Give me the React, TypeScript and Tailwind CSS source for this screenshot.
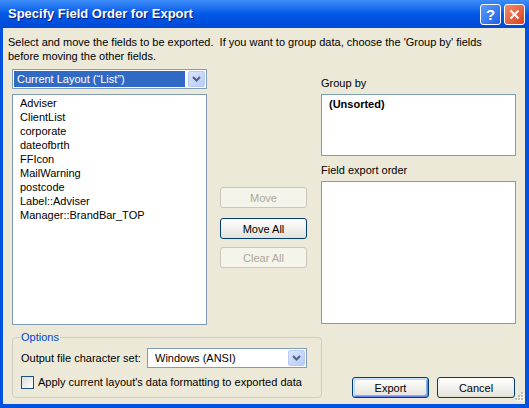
import React from 'react';

const FIELDS = [
  'Adviser',
  'ClientList',
  'corporate',
  'dateofbrth',
  'FFIcon',
  'MailWarning',
  'postcode',
  'Label::Adviser',
  'Manager::BrandBar_TOP',
];

// XP style combo arrow button
function ComboArrow() {
  return (
    <div className="flex h-full w-[17px] items-center justify-center rounded-[2px] border border-[#b9cbf3] bg-gradient-to-br from-[#dbe6fd] to-[#b7cbf7]">
      <svg width="9" height="6" viewBox="0 0 9 6">
        <path d="M1 1 L4.5 4.5 L8 1" stroke="#4d6185" strokeWidth="2" fill="none" />
      </svg>
    </div>
  );
}

function XpButton({
  label,
  disabled,
  isDefault,
  className = '',
}: {
  label: string;
  disabled?: boolean;
  isDefault?: boolean;
  className?: string;
}) {
  if (disabled) {
    return (
      <div
        className={`flex h-[21px] items-center justify-center rounded-[3px] border border-[#c9c7ba] bg-[#f5f4ea] text-[#aca899] ${className}`}
      >
        {label}
      </div>
    );
  }
  return (
    <div
      className={`flex h-[21px] items-center justify-center rounded-[3px] border border-[#003c74] bg-gradient-to-b from-white to-[#e3e2da] text-black ${
        isDefault ? 'shadow-[inset_1px_1px_0_#cee7ff,inset_-1px_-1px_0_#6982ee,inset_2px_2px_0_#bcd4f6,inset_-2px_-2px_0_#89ade4]' : ''
      } ${className}`}
    >
      {label}
    </div>
  );
}

export default function App() {
  return (
    <div
      className="relative flex h-[408px] w-[529px] flex-col overflow-hidden bg-[#0053e1] text-[11px] leading-[14px] text-black"
      style={{ fontFamily: '"Liberation Sans", Arial, sans-serif' }}
    >
      {/* Title bar */}
      <div className="flex h-[28px] shrink-0 items-center bg-gradient-to-b from-[#3c8cf8] via-[#0058e6] to-[#0049d6] pl-[8px] pr-[4px]">
        <div className="flex-1 text-[13px] font-bold text-white [text-shadow:1px_1px_0_#0a1e78]">
          Specify Field Order for Export
        </div>
        <div className="flex gap-[3px] pt-[1px]">
          <div className="flex h-[21px] w-[21px] items-center justify-center rounded-[3px] border border-white bg-gradient-to-br from-[#5a9bff] to-[#1f5fe0] text-[15px] font-bold text-white">
            ?
          </div>
          <div className="flex h-[21px] w-[21px] items-center justify-center rounded-[3px] border border-white bg-gradient-to-br from-[#f08a6a] to-[#d83d1a]">
            <svg width="11" height="11" viewBox="0 0 11 11">
              <path d="M1.5 1.5 L9.5 9.5 M9.5 1.5 L1.5 9.5" stroke="white" strokeWidth="2" />
            </svg>
          </div>
        </div>
      </div>

      {/* Body */}
      <div className="relative ml-[3px] mr-[4px] mb-[4px] flex flex-1 flex-col bg-[#ece9d8] pl-[5px] pt-[7px]">
        <p>
          Select and move the fields to be exported.&nbsp; If you want to group data, choose the 'Group by' fields
          <br />
          before moving the other fields.
        </p>

        <div className="mt-[6px] flex pl-[4px]">
          {/* Left column */}
          <div className="flex w-[195px] flex-col gap-[5px]">
            <div className="flex h-[20px] items-center border border-[#7f9db9] bg-white p-[1px]">
              <div className="flex h-full flex-1 items-center bg-[#316ac5] pl-[3px] text-white">
                Current Layout (“List”)
              </div>
              <div className="ml-[3px] h-full">
                <ComboArrow />
              </div>
            </div>
            <div className="h-[231px] border border-[#7f9db9] bg-white pl-[7px] pt-[1px]">
              {FIELDS.map((f) => (
                <div key={f} className="h-[14px]">
                  {f}
                </div>
              ))}
            </div>
          </div>

          {/* Middle buttons */}
          <div className="ml-[13px] flex w-[87px] flex-col pt-[118px]">
            <XpButton label="Move" disabled />
            <XpButton label="Move All" className="mt-[10px]" />
            <XpButton label="Clear All" disabled className="mt-[8px]" />
          </div>

          {/* Right column */}
          <div className="ml-[14px] flex w-[195px] flex-col pt-[7px]">
            <div className="h-[14px]">Group by</div>
            <div className="mt-[4px] h-[62px] border border-[#7f9db9] bg-white pl-[7px] pt-[2px] font-bold">
              (Unsorted)
            </div>
            <div className="mt-[7px] h-[14px]">Field export order</div>
            <div className="mt-[4px] h-[143px] border border-[#7f9db9] bg-white" />
          </div>
        </div>

        {/* Bottom row */}
        <div className="mt-[5px] flex items-end pl-[4px]">
          <fieldset className="w-[310px] rounded-[4px] border border-[#d0d0bf] px-[8px] pb-[8px] pt-[4px]">
            <legend className="ml-[-1px] px-[1px] text-[#0046d5]">Options</legend>
            <div className="flex h-[20px] items-center">
              <span className="w-[126px]">Output file character set:</span>
              <div className="flex h-[20px] w-[160px] items-center border border-[#7f9db9] bg-white p-[1px]">
                <div className="flex-1 pl-[6px]">Windows (ANSI)</div>
                <ComboArrow />
              </div>
            </div>
            <div className="mt-[7px] flex items-center gap-[4px]">
              <div className="h-[13px] w-[13px] border border-[#1c5180] bg-gradient-to-br from-[#dcdcd7] to-white" />
              <span>Apply current layout's data formatting to exported data</span>
            </div>
          </fieldset>
          <div className="ml-[30px] flex gap-[8px]">
            <XpButton label="Export" isDefault className="w-[77px]" />
            <XpButton label="Cancel" className="w-[78px]" />
          </div>
        </div>

        {/* Resize grip */}
        <svg className="absolute bottom-[1px] right-[1px]" width="12" height="12" viewBox="0 0 12 12">
          {[
            [9, 1],
            [6, 4],
            [9, 4],
            [3, 7],
            [6, 7],
            [9, 7],
          ].map(([x, y]) => (
            <g key={`${x}-${y}`}>
              <rect x={x + 1} y={y + 1} width="2" height="2" fill="#fff" />
              <rect x={x} y={y} width="2" height="2" fill="#c1bfb1" />
            </g>
          ))}
        </svg>
      </div>
    </div>
  );
}
